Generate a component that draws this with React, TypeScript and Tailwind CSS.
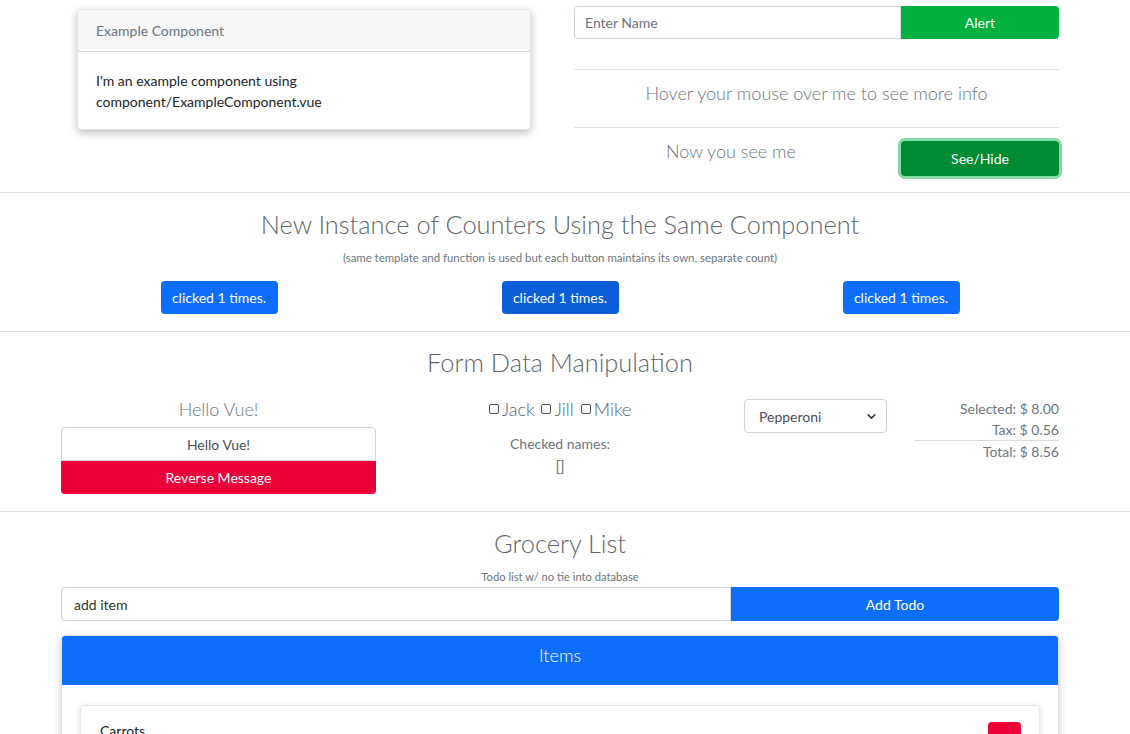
import { ChevronDown } from 'lucide-react'

const font = { fontFamily: 'Lato, "Open Sans", sans-serif' }

function Counter({ active }: { active?: boolean }) {
  return (
    <div className="flex justify-center">
      <button
        className={`h-[33px] w-[117px] rounded-[4px] text-[14px] text-white ${
          active ? 'bg-[#0b5ed7]' : 'bg-[#0d6efd]'
        }`}
      >
        clicked 1 times.
      </button>
    </div>
  )
}

function Box() {
  return <span className="inline-block h-[10px] w-[10px] rounded-[2px] border border-[#555]" />
}

export default function App() {
  return (
    <div className="min-h-[734px] bg-white text-[#212529]" style={font}>
      {/* Top: example component + alert / hover / toggle */}
      <div className="flex pb-[16px] pl-[61px] pr-[71px]">
        <div className="w-[499px] pl-4 pt-[9px]">
          <div className="w-[454px] overflow-hidden rounded-[4px] border border-[#e4e4e4] bg-white shadow-[0_3px_8px_rgba(0,0,0,0.25)]">
            <div className="flex h-[42px] items-center border-b border-[#dcdcdc] bg-[#f7f7f7] px-[18px] text-[14px] text-[#6c757d]">
              Example Component
            </div>
            <div className="px-[18px] pb-[17px] pt-[18px] text-[14px] leading-[21px] text-[#212529]">
              <p>I'm an example component using</p>
              <p>component/ExampleComponent.vue</p>
            </div>
          </div>
        </div>

        <div className="flex-1 pl-[14px] pt-[6px]">
          <div className="flex h-[33px]">
            <input
              placeholder="Enter Name"
              className="h-full w-[327px] rounded-l-[4px] border border-[#ced4da] px-[10px] text-[14px] text-[#212529] placeholder:text-[#6c757d] outline-none"
            />
            <button className="h-full flex-1 rounded-r-[4px] bg-[#00b140] text-[14px] text-white">
              Alert
            </button>
          </div>
          <div className="mt-[30px] border-t border-[#e2e2e2]" />
          <div className="flex h-[57px] items-center justify-center pb-[10px] text-[18px] font-light text-[#6c757d]">
            Hover your mouse over me to see more info
          </div>
          <div className="border-t border-[#e2e2e2]" />
          <div className="flex items-start gap-[13px]">
            <div className="mt-[10px] flex-1 text-center text-[18px] font-light leading-[26px] text-[#6c757d]">
              Now you see me
            </div>
            <button className="mt-[13px] h-[35px] w-[158px] rounded-[4px] bg-[#008c35] text-[14px] text-white shadow-[0_0_0_3px_#86dba6]">
              See/Hide
            </button>
          </div>
        </div>
      </div>

      {/* Counters */}
      <div className="border-t border-[#e2e2e2] pb-[17px] pr-[10px] pt-[16px] text-center">
        <h2 className="text-[25.4px] font-light leading-[31px] text-[#5f666d]">
          New Instance of Counters Using the Same Component
        </h2>
        <p className="mt-[11px] text-[11.4px] leading-[14px] text-[#6c757d]">
          (same template and function is used but each button maintains its own, separate count)
        </p>
        <div className="mx-auto mt-[16px] grid w-[1023px] grid-cols-3">
          <Counter />
          <Counter active />
          <Counter />
        </div>
      </div>

      {/* Form data */}
      <div className="border-t border-[#e2e2e2] pb-[17px] pl-[61px] pr-[71px] pt-[15px]">
        <h2 className="text-center text-[25.4px] font-light leading-[31px] text-[#5f666d]">
          Form Data Manipulation
        </h2>
        <div className="mt-[18px] flex items-start">
          <div className="w-[315px] text-center">
            <div className="text-[18px] font-light leading-[26px] text-[#6c757d]">Hello Vue!</div>
            <input
              defaultValue="Hello Vue!"
              className="mt-[5px] h-[34px] w-full rounded-t-[4px] border border-[#ced4da] text-center text-[14px] text-[#495057] outline-none"
            />
            <button className="h-[33px] w-full rounded-b-[4px] bg-[#ec0038] text-[14px] text-white">
              Reverse Message
            </button>
          </div>

          <div className="w-[368px] text-center text-[#6c757d]">
            <div className="flex items-center justify-center gap-[3px] text-[18px] font-light leading-[26px] text-[#5a6268]">
              <Box />
              <span>Jack</span>
              <span className="ml-[1px]" />
              <Box />
              <span>Jill</span>
              <span className="ml-[1px]" />
              <Box />
              <span>Mike</span>
            </div>
            <div className="mt-[12px] text-[14px] leading-[20px]">Checked names:</div>
            <div className="mt-[1px] text-[15px] leading-[22px]">[]</div>
          </div>

          <div className="mt-[3px] w-[143px]">
            <div className="flex h-[34px] items-center justify-between rounded-[4px] border border-[#ced4da] pl-[14px] pr-[8px] text-[14px] text-[#495057]">
              <span>Pepperoni</span>
              <ChevronDown size={13} strokeWidth={3} className="text-[#343a40]" />
            </div>
          </div>

          <div className="ml-[28px] w-[144px] text-right text-[14px] leading-[21px] text-[#6c757d]">
            <div className="pt-[2px]">Selected: $ 8.00</div>
            <div>Tax: $ 0.56</div>
            <div className="border-t border-[#dcdcdc]">Total: $ 8.56</div>
          </div>
        </div>
      </div>

      {/* Grocery list */}
      <div className="border-t border-[#e2e2e2] pl-[61px] pr-[71px] pt-[16px]">
        <h2 className="text-center text-[25.4px] font-light leading-[31px] text-[#5f666d]">
          Grocery List
        </h2>
        <p className="mt-[11px] text-center text-[11.2px] leading-[14px] text-[#6c757d]">
          Todo list w/ no tie into database
        </p>
        <div className="mt-[3px] flex h-[34px]">
          <input
            placeholder="add item"
            className="h-full w-[670px] rounded-l-[4px] border border-[#ced4da] px-[12px] text-[14px] placeholder:text-[#333] outline-none"
          />
          <button className="h-full flex-1 rounded-r-[4px] bg-[#0d6efd] text-[14px] text-white">
            Add Todo
          </button>
        </div>

        <div className="mt-[14px] overflow-hidden rounded-t-[4px] border border-[#e0e0e0] shadow-[0_2px_8px_rgba(0,0,0,0.2)]">
          <div className="h-[49px] bg-[#0d6efd] pt-[6px] text-center text-[18px] font-light leading-[27px] text-white">
            Items
          </div>
          <div className="px-[18px] pb-[18px] pt-[20px]">
            <div className="flex items-start justify-between rounded-[4px] border border-[#e6e6e6] pl-[19px] pr-[18px] pt-[15px] shadow-[0_2px_6px_rgba(0,0,0,0.15)]">
              <span className="text-[14px] leading-[20px]">Carrots</span>
              <button className="mt-[1px] h-[33px] w-[33px] rounded-[4px] bg-[#ec0038] text-white" />
            </div>
          </div>
        </div>
      </div>
    </div>
  )
}
